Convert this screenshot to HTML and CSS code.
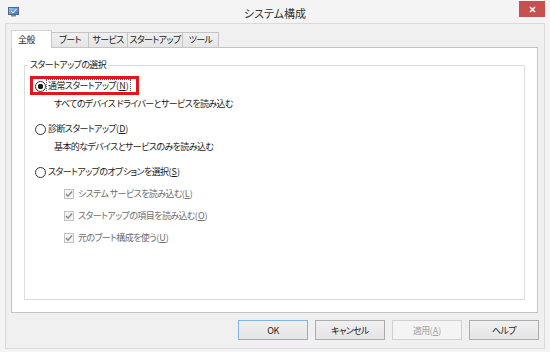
FILE: index.html
```html
<!DOCTYPE html>
<html lang="ja">
<head>
  <meta charset="UTF-8">
  <title>システム構成</title>
  <link rel="stylesheet" href="styles.css">
</head>
<body>
  <div class="window">

    <!-- タイトルバー -->
    <div class="titlebar">
      <svg class="app-icon" width="11" height="10" viewBox="0 0 11 10">
        <defs>
          <linearGradient id="scr" x1="0" y1="0" x2="1" y2="1">
            <stop offset="0" stop-color="#9fcaf5"/>
            <stop offset="1" stop-color="#2f6fcf"/>
          </linearGradient>
        </defs>
        <rect x="0.5" y="0.5" width="10" height="7" fill="url(#scr)" stroke="#56657a"/>
        <rect x="3" y="8" width="5" height="1.5" fill="#7d8794"/>
        <path d="M3 4 L5 6 L8.5 2" fill="none" stroke="#ffffff" stroke-width="1"/>
      </svg>
      <div class="title">システム構成</div>
      <div class="close">
        <svg width="7" height="7" viewBox="0 0 7 7">
          <path d="M1 1 L6 6 M6 1 L1 6" stroke="#ffffff" stroke-width="1.6"/>
        </svg>
      </div>
    </div>

    <div class="client">
      <div class="tabs">
        <div class="tab active tab-general">全般</div>
        <div class="tab tab-boot">ブート</div>
        <div class="tab tab-services">サービス</div>
        <div class="tab tab-startup">スタートアップ</div>
        <div class="tab tab-tools">ツール</div>
      </div>

      <div class="panel">
        <fieldset class="group">
          <legend>スタートアップの選択</legend>

          <div class="option first">
            <span class="marked">
              <span class="radio checked"></span>
              <span class="label focus">通常スタートアップ<span class="key">(<u>N</u>)</span></span>
            </span>
          </div>
          <p class="desc">すべてのデバイス ドライバーとサービスを読み込む</p>

          <div class="option">
            <span class="radio"></span>
            <span class="label">診断スタートアップ<span class="key">(<u>D</u>)</span></span>
          </div>
          <p class="desc">基本的なデバイスとサービスのみを読み込む</p>

          <div class="option">
            <span class="radio"></span>
            <span class="label">スタートアップのオプションを選択<span class="key">(<u>S</u>)</span></span>
          </div>

          <div class="check">
            <span class="box">
              <svg width="8" height="8" viewBox="0 0 8 8"><path d="M1 4 L3 6.2 L7 1.5" fill="none" stroke="#8a8a8a" stroke-width="1.5"/></svg>
            </span>
            <span class="label">システム サービスを読み込む<span class="key">(<u>L</u>)</span></span>
          </div>
          <div class="check">
            <span class="box">
              <svg width="8" height="8" viewBox="0 0 8 8"><path d="M1 4 L3 6.2 L7 1.5" fill="none" stroke="#8a8a8a" stroke-width="1.5"/></svg>
            </span>
            <span class="label">スタートアップの項目を読み込む<span class="key">(<u>O</u>)</span></span>
          </div>
          <div class="check">
            <span class="box">
              <svg width="8" height="8" viewBox="0 0 8 8"><path d="M1 4 L3 6.2 L7 1.5" fill="none" stroke="#8a8a8a" stroke-width="1.5"/></svg>
            </span>
            <span class="label">元のブート構成を使う<span class="key">(<u>U</u>)</span></span>
          </div>
        </fieldset>
      </div>

      <div class="buttons">
        <button class="btn default">OK</button>
        <button class="btn">キャンセル</button>
        <button class="btn" disabled>適用<span class="key">(<u>A</u>)</span></button>
        <button class="btn">ヘルプ</button>
      </div>
    </div>

  </div>
</body>
</html>
```

FILE: styles.css
```css
* {
  box-sizing: border-box;
}
html, body {
  margin: 0;
  padding: 0;
}
body {
  background: #f4f4f4;
  font-family: "Noto Sans CJK JP", "Noto Sans", sans-serif;
  font-size: 9px;
  letter-spacing: -0.6px;
  font-feature-settings: "palt";
  color: #1a1a1a;
}

.window {
  width: 550px;
  height: 352px;
  padding: 0 5px 3px;
  display: flex;
  flex-direction: column;
}

/* タイトルバー */
.titlebar {
  height: 23px;
  flex: none;
  display: grid;
  grid-template-columns: 1fr auto 1fr;
  align-items: start;
}
.app-icon {
  margin: 7px 0 0 3px;
}
.title {
  font-size: 11px;
  letter-spacing: 0;
  line-height: 14px;
  padding-top: 6px;
  color: #333;
}
.close {
  justify-self: end;
  width: 26px;
  height: 16px;
  margin-top: 1px;
  background: #c75050;
  display: flex;
  align-items: center;
  justify-content: center;
}

.client {
  flex: 1;
  border: 1px solid #dadada;
  background: #f0f0f0;
  padding: 6px 5px 0;
  display: flex;
  flex-direction: column;
}

/* タブ */
.tabs {
  height: 18px;
  margin-bottom: -1px;
  display: flex;
  align-items: flex-end;
  position: relative;
  z-index: 1;
}
.tab {
  height: 15px;
  margin-bottom: 1px;
  margin-right: -1px;
  line-height: 13px;
  text-align: center;
  background: linear-gradient(#f0f0f0, #e5e5e5);
  border: 1px solid #c4c4c4;
  border-bottom: none;
  white-space: nowrap;
}
.tab.active {
  height: 18px;
  margin-bottom: 0;
  padding-left: 6px;
  padding-top: 2px;
  text-align: left;
  background: #fff;
  border-color: #d4d4d4;
}
.tab-general { width: 41px; }
.tab-boot { width: 38px; }
.tab-services { width: 40px; }
.tab-startup { width: 56px; }
.tab-tools { width: 37px; }

.panel {
  height: 266px;
  flex: none;
  margin-right: 1px;
  background: #fff;
  border: 1px solid #c4c4c4;
  padding: 10px 12px 12px;
  display: flex;
  flex-direction: column;
}

/* グループボックス */
.group {
  flex: 1;
  margin: 0;
  min-width: 0;
  border: 1px solid #dcdcdc;
  padding: 6px 0 0;
}
.group legend {
  margin-left: 3px;
  padding: 0 2px;
  line-height: 14px;
}

.option, .check {
  height: 16px;
  display: flex;
  align-items: center;
}
.option {
  margin-top: 9px;
  padding-left: 10px;
}
.option.first {
  margin-top: 0;
}
.desc + .option {
  margin-top: 9px;
}
.marked {
  display: flex;
  align-items: center;
  height: 16px;
  position: relative;
}
.marked::after {
  content: '';
  position: absolute;
  left: -5px;
  right: -8px;
  top: -2px;
  bottom: -1px;
  border: 3px solid #e3151d;
}

.radio {
  width: 11px;
  height: 11px;
  flex: none;
  border: 1px solid #333;
  border-radius: 50%;
  background: #fff;
}
.radio.checked {
  background: radial-gradient(circle, #1a1a1a 2.4px, #fff 3px);
}
.label {
  border: 1px dotted transparent;
  padding: 0 1px;
  line-height: 12px;
}
.label.focus {
  border-color: #555;
}
.key {
  letter-spacing: 0;
}

.desc {
  margin: 2px 0 0;
  padding-left: 29px;
  line-height: 16px;
}

.check {
  margin-top: 6px;
  padding-left: 39px;
  color: #6d6d6d;
}
.box {
  width: 10px;
  height: 10px;
  flex: none;
  margin-right: 2px;
  border: 1px solid #c2c2c2;
  background: #f4f4f4;
  display: flex;
  align-items: center;
  justify-content: center;
}

/* ボタン */
.buttons {
  margin-top: 7px;
  display: flex;
  justify-content: flex-end;
  gap: 7px;
}
.btn {
  width: 70px;
  height: 20px;
  padding: 0;
  font: inherit;
  letter-spacing: inherit;
  color: #1a1a1a;
  background: linear-gradient(#f0f0f0, #e5e5e5);
  border: 1px solid #acacac;
}
.btn.default {
  border-color: #7eb4ea;
}
.btn:disabled {
  color: #a3a3a3;
  background: #f4f4f4;
  border-color: #d0d0d0;
}
```
